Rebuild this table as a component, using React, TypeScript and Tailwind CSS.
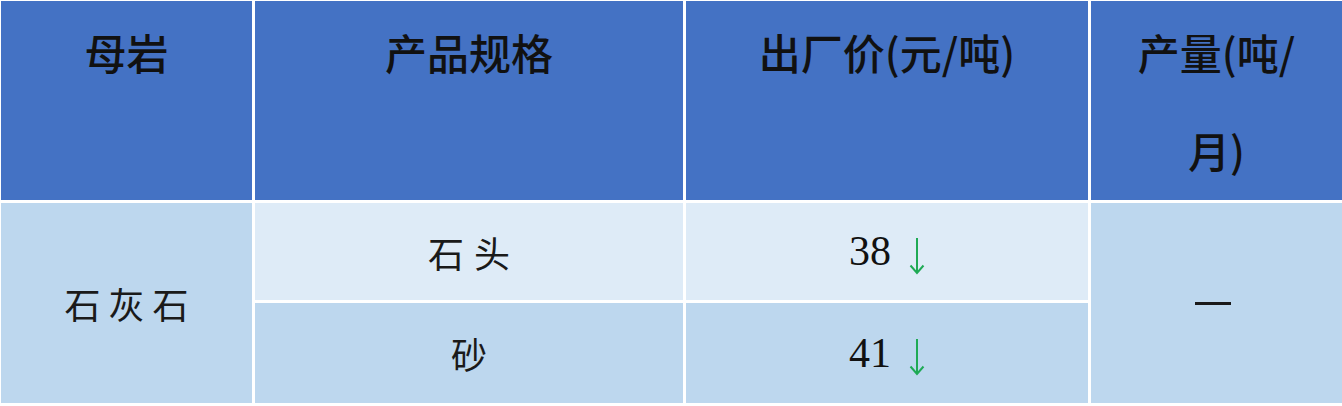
import React from "react";

const Arrow = () => (
  <svg width="16" height="38" viewBox="0 0 16 38" className="ml-[18px] mt-[8px]">
    <line x1="8" y1="1" x2="8" y2="36" stroke="#1faa55" strokeWidth="2" />
    <polyline points="1.5,28.5 8,36 14.5,28.5" fill="none" stroke="#1faa55" strokeWidth="2" />
  </svg>
);

const headerCls =
  "bg-[#4472c4] flex flex-col items-center pt-[20px] text-[42px] leading-[62px] font-[500] text-[#111]";
const cjk = { fontFamily: '"Noto Sans CJK SC", sans-serif' } as React.CSSProperties;

export default function App() {
  return (
    <div
      className="w-[1342px] h-[406px] bg-white pt-[1px] pl-[1px] pb-[3px] grid grid-cols-[251px_428px_402px_251px] grid-rows-[199px_97px_100px] gap-[3px] overflow-hidden"
      style={cjk}
    >
      <div className={headerCls}>母岩</div>
      <div className={headerCls}>产品规格</div>
      <div className={headerCls}>出厂价(元/吨)</div>
      <div className={headerCls}>
        <div>产量(吨/</div>
        <div className="mt-[36px]">月)</div>
      </div>

      <div className="row-span-2 bg-[#bdd7ee] flex items-center justify-center text-[36px] tracking-[8px] pl-[8px] text-[#1a1a1a] font-[400]">
        石灰石
      </div>
      <div className="bg-[#deebf7] flex items-center justify-center text-[36px] tracking-[10px] pl-[10px] text-[#1a1a1a] font-[400]">
        石头
      </div>
      <div className="bg-[#deebf7] flex items-center justify-center">
        <span className="text-[42px] text-[#111]" style={{ fontFamily: '"Liberation Serif", serif' }}>38</span>
        <Arrow />
      </div>
      <div className="row-span-2 bg-[#bdd7ee] flex items-center justify-center">
        <div className="w-[36px] h-[3px] bg-[#1a1a1a] mr-[8px]" />
      </div>

      <div className="bg-[#bdd7ee] flex items-center justify-center text-[36px] text-[#1a1a1a] font-[400]">
        砂
      </div>
      <div className="bg-[#bdd7ee] flex items-center justify-center">
        <span className="text-[42px] text-[#111]" style={{ fontFamily: '"Liberation Serif", serif' }}>41</span>
        <Arrow />
      </div>
    </div>
  );
}
